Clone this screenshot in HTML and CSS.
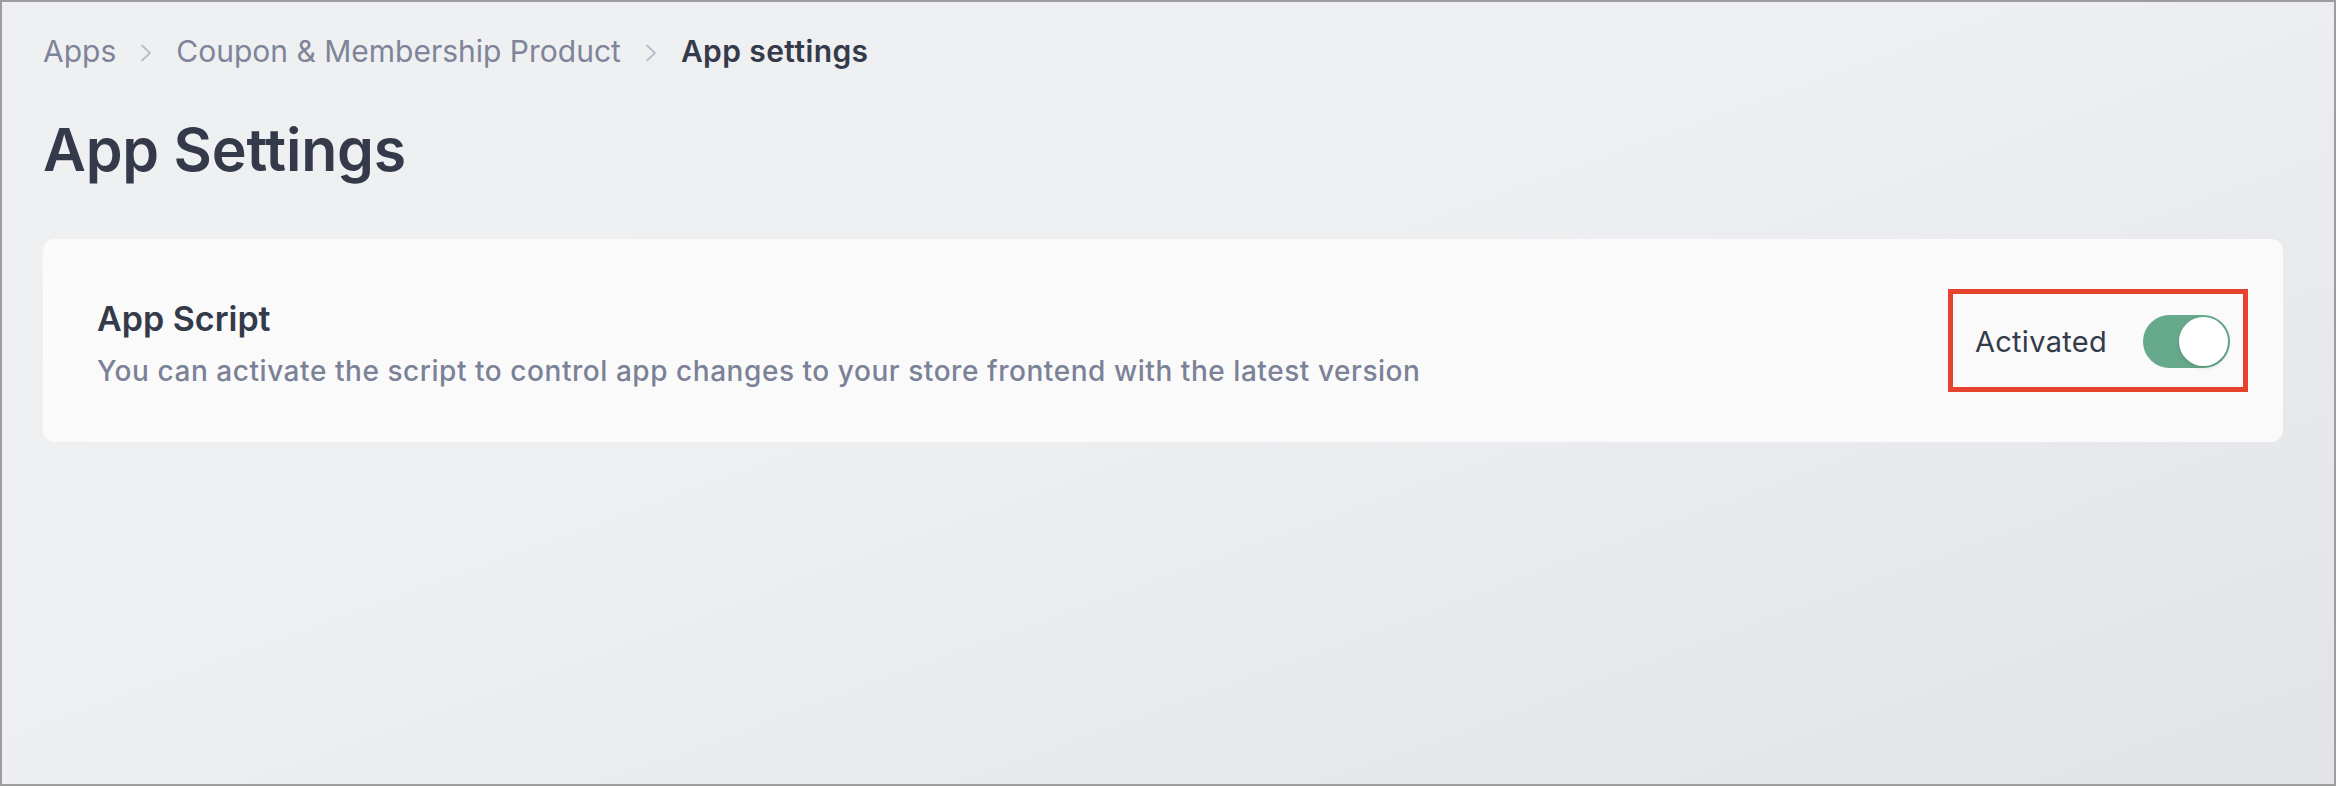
FILE: index.html
```html
<!DOCTYPE html>
<html lang="en">
<head>
<meta charset="utf-8">
<title>App Settings</title>
<link rel="stylesheet" href="styles.css">
</head>
<body>
<div class="frame">
  <nav class="breadcrumb">
    <span class="crumb">Apps</span>
    <svg class="chev" width="12" height="18" viewBox="0 0 12 18"><polyline points="2,1.5 10,9 2,16.5" fill="none" stroke="#b9bdc8" stroke-width="1.8" stroke-linecap="round" stroke-linejoin="round"/></svg>
    <span class="crumb">Coupon &amp; Membership Product</span>
    <svg class="chev" width="12" height="18" viewBox="0 0 12 18"><polyline points="2,1.5 10,9 2,16.5" fill="none" stroke="#b9bdc8" stroke-width="1.8" stroke-linecap="round" stroke-linejoin="round"/></svg>
    <span class="crumb current">App settings</span>
  </nav>
  <h1 class="title">App Settings</h1>
  <section class="card">
    <div class="card-text">
      <h2 class="card-title">App Script</h2>
      <p class="card-desc">You can activate the script to control app changes to your store frontend with the latest version</p>
    </div>
    <div class="highlight">
      <span class="toggle-label">Activated</span>
      <span class="toggle"><span class="knob"></span></span>
    </div>
  </section>
</div>
</body>
</html>
```
FILE: styles.css
```css
* { box-sizing: border-box; }
html, body { margin: 0; padding: 0; }
body {
  width: 2336px;
  height: 786px;
  font-family: Inter, "Noto Sans", "Liberation Sans", sans-serif;
}
.frame {
  width: 2336px;
  height: 786px;
  border: 2px solid #9d9d9f;
  background: linear-gradient(160deg, #eff0f2 0%, #eeeff1 45%, #e2e3e6 100%);
  padding: 31px 51px 0 41px;
}
.breadcrumb {
  display: flex;
  align-items: center;
  gap: 24px;
  height: 37px;
  font-size: 30px;
  line-height: 37px;
}
.crumb { color: #7e8599; font-weight: 400; }
.crumb.current { color: #343a4a; font-weight: 600; letter-spacing: 0.4px; }
.chev { display: block; margin-top: 2px; }
.title {
  margin: 45px 0 0 0;
  font-size: 59px;
  line-height: 70px;
  font-weight: 600;
  color: #343a4a;
  letter-spacing: -0.2px;
}
.card {
  margin-top: 54px;
  height: 203px;
  background: #fafafa;
  border-radius: 12px;
  display: flex;
  align-items: center;
  justify-content: space-between;
  padding: 0 35px 0 54px;
}
.card-text { margin-top: 6px; }
.card-title {
  margin: 0;
  font-size: 34px;
  line-height: 40px;
  font-weight: 600;
  color: #343a4a;
}
.card-desc {
  margin: 16px 0 0 0;
  font-size: 28px;
  line-height: 33px;
  font-weight: 500;
  color: #7b8297;
  letter-spacing: 0.55px;
}
.highlight {
  display: flex;
  align-items: center;
  gap: 36px;
  height: 103px;
  border: 5px solid #e5432d;
  padding: 0 13px 0 22px;
}
.toggle-label {
  font-size: 29px;
  line-height: 34px;
  color: #343a4a;
  letter-spacing: 0.3px;
  margin-top: 2px;
}
.toggle {
  width: 87px;
  height: 53px;
  border-radius: 27px;
  background: #66a98c;
  display: flex;
  align-items: center;
  justify-content: flex-end;
  padding: 0 2px;
  margin-top: 1px;
}
.knob {
  width: 49px;
  height: 49px;
  border-radius: 50%;
  background: #ffffff;
  box-shadow: 0 2px 4px rgba(0, 0, 0, 0.12);
}
```
